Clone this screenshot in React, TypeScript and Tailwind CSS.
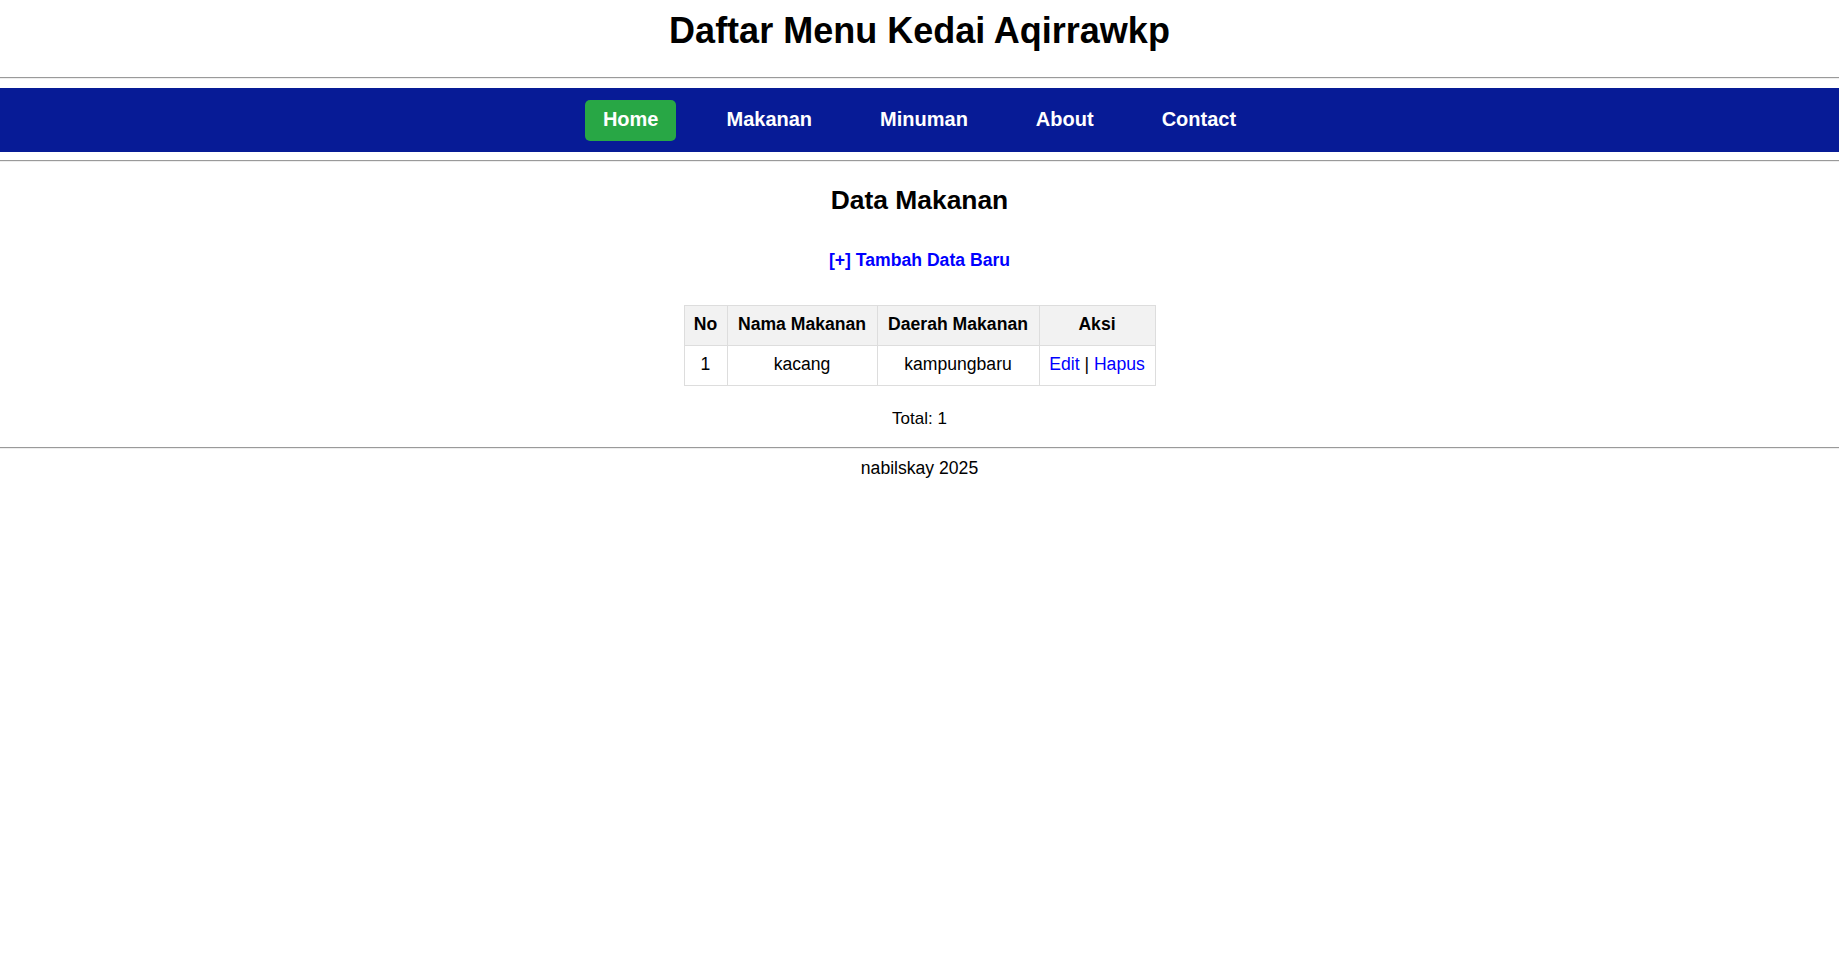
const menu = ["Home", "Makanan", "Minuman", "About", "Contact"];

const rows = [{ no: 1, nama: "kacang", daerah: "kampungbaru" }];

function Rule() {
  return <div className="h-[2px] border-t border-b border-t-[#9a9a9a] border-b-[#eeeeee]" />;
}

export default function App() {
  return (
    <div className="min-h-screen bg-white text-black" style={{ fontFamily: "'Liberation Sans', Arial, sans-serif" }}>
      <h1 className="pt-[11px] mb-[26px] text-center text-[36px] leading-[40px] font-bold">Daftar Menu Kedai Aqirrawkp</h1>
      <Rule />

      {/* nav */}
      <nav className="mt-[9px] h-[64px] bg-[#071b96] flex items-center justify-center gap-[32px]">
        {menu.map((m, i) => (
          <a
            key={m}
            href="#"
            className={
              "px-[18px] pt-[8px] pb-[10px] rounded-[5px] text-white font-bold text-[20px] leading-[23px] " +
              (i === 0 ? "bg-[#28a745]" : "")
            }
          >
            {m}
          </a>
        ))}
      </nav>
      <div className="mt-[8px]">
        <Rule />
      </div>

      <h2 className="mt-[23px] text-center text-[26.4px] leading-[30px] font-bold">Data Makanan</h2>

      <div className="mt-[35px] text-center leading-[20px]">
        <a href="#" className="text-[#0000ff] font-bold text-[17.6px]">
          [+] Tambah Data Baru
        </a>
      </div>

      <table className="mt-[34px] mx-auto border-collapse table-fixed w-[471px] text-[17.6px] leading-[20px]">
        <colgroup>
          <col className="w-[43px]" />
          <col className="w-[150px]" />
          <col className="w-[162px]" />
          <col className="w-[116px]" />
        </colgroup>
        <thead>
          <tr className="bg-[#f2f2f2] h-[40px]">
            <th className="border border-[#dddddd] px-[8px] pt-[7px] pb-[11px] font-bold">No</th>
            <th className="border border-[#dddddd] px-[8px] pt-[7px] pb-[11px] font-bold">Nama Makanan</th>
            <th className="border border-[#dddddd] px-[8px] pt-[7px] pb-[11px] font-bold">Daerah Makanan</th>
            <th className="border border-[#dddddd] px-[8px] pt-[7px] pb-[11px] font-bold">Aksi</th>
          </tr>
        </thead>
        <tbody>
          {rows.map((r) => (
            <tr key={r.no} className="h-[40px] text-center">
              <td className="border border-[#dddddd] px-[8px] pt-[7px] pb-[11px]">{r.no}</td>
              <td className="border border-[#dddddd] px-[8px] pt-[7px] pb-[11px]">{r.nama}</td>
              <td className="border border-[#dddddd] px-[8px] pt-[7px] pb-[11px]">{r.daerah}</td>
              <td className="border border-[#dddddd] px-[6px] pt-[7px] pb-[11px] whitespace-nowrap">
                <a href="#" className="text-[#0000ff]">Edit</a> |{" "}
                <a href="#" className="text-[#0000ff]">Hapus</a>
              </td>
            </tr>
          ))}
        </tbody>
      </table>

      <p className="mt-[23px] text-center text-[17px] leading-[20px]">Total: {rows.length}</p>

      <footer className="mt-[18px]">
        <Rule />
        <p className="mt-[9px] text-center text-[17.6px] leading-[20px]">nabilskay 2025</p>
      </footer>
    </div>
  );
}
